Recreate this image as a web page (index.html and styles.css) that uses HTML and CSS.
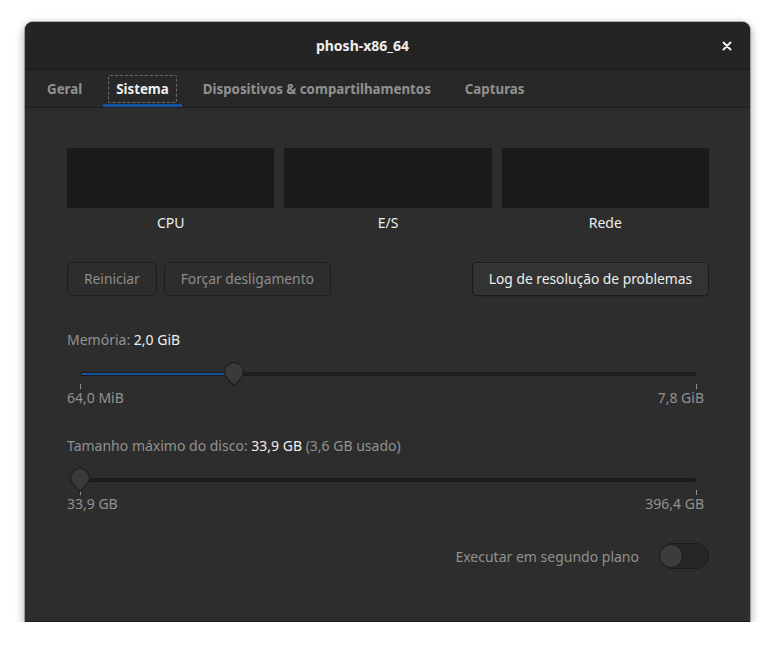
FILE: index.html
```html
<!DOCTYPE html>
<html>
<head>
<meta charset="utf-8">
<link rel="stylesheet" href="styles.css">
</head>
<body>
<div class="window">
  <div class="titlebar">
    <span class="title">phosh-x86_64</span>
    <span class="close">
      <svg width="10" height="10" viewBox="0 0 10 10"><path d="M1.5 1.5 L8.5 8.5 M8.5 1.5 L1.5 8.5" stroke="#eeeeec" stroke-width="2" stroke-linecap="round"/></svg>
    </span>
  </div>
  <div class="tabs">
    <div class="tab">Geral</div>
    <div class="tab active"><span class="focus">Sistema</span></div>
    <div class="tab">Dispositivos &amp; compartilhamentos</div>
    <div class="tab">Capturas</div>
  </div>
  <div class="content">
    <div class="graphs">
      <div class="graph"><div class="gbox"></div><div class="glabel">CPU</div></div>
      <div class="graph"><div class="gbox"></div><div class="glabel">E/S</div></div>
      <div class="graph"><div class="gbox"></div><div class="glabel">Rede</div></div>
    </div>
    <div class="buttons">
      <button class="btn disabled">Reiniciar</button>
      <button class="btn disabled">Forçar desligamento</button>
      <span class="spacer"></span>
      <button class="btn">Log de resolução de problemas</button>
    </div>
    <div class="setting">
      <div class="slabel">Memória: <span class="val">2,0 GiB</span></div>
      <div class="slider">
        <div class="trough"><div class="fill" style="width:25%"></div></div>
        <div class="knob" style="left:25%"></div>
      </div>
      <div class="ticks"><span class="tick"></span><span class="tick"></span></div>
      <div class="range"><span>64,0 MiB</span><span>7,8 GiB</span></div>
    </div>
    <div class="setting disk">
      <div class="slabel">Tamanho máximo do disco: <span class="val">33,9 GB</span> (3,6 GB usado)</div>
      <div class="slider">
        <div class="trough"><div class="fill" style="width:0%"></div></div>
        <div class="knob" style="left:0%"></div>
      </div>
      <div class="ticks"><span class="tick"></span><span class="tick"></span></div>
      <div class="range"><span>33,9 GB</span><span>396,4 GB</span></div>
    </div>
    <div class="switchrow">
      <span class="swlabel">Executar em segundo plano</span>
      <span class="switch"><span class="swknob"></span></span>
    </div>
  </div>
</div>
</body>
</html>
```
FILE: styles.css
```css
html, body {
  margin: 0;
  padding: 0;
  background: #ffffff;
}
body {
  font-family: "Noto Sans", "Open Sans", sans-serif;
  font-size: 14px;
  color: #eeeeec;
}
.window {
  margin: 22px 0 0 25px;
  width: 725px;
  height: 600px;
  display: flex;
  flex-direction: column;
  background: #2d2d2d;
  border-radius: 8px 8px 0 0;
  box-shadow: 0 3px 9px 1px rgba(0,0,0,0.35), 0 0 0 1px rgba(0,0,0,0.25);
  overflow: hidden;
  border-bottom: 1px solid #1c1c1c;
  box-sizing: border-box;
}
.titlebar {
  height: 47px;
  flex: none;
  background: #242424;
  border-bottom: 1px solid #1b1b1b;
  display: flex;
  align-items: center;
}
.title {
  flex: 1;
  text-align: center;
  font-weight: bold;
  font-size: 14px;
  color: #eeeeec;
}
.close {
  width: 50px;
  display: flex;
  justify-content: center;
  padding-left: 3px;
  box-sizing: border-box;
}
.tabs {
  height: 37px;
  flex: none;
  background: #282828;
  border-bottom: 1px solid #1f1f1f;
  display: flex;
  align-items: stretch;
  padding-left: 5px;
}
.tab {
  display: flex;
  align-items: center;
  padding: 0 13px;
  margin: 0 4px;
  font-weight: bold;
  color: #919190;
  font-size: 13.3px;
}
.tab.active {
  color: #eeeeec;
  padding: 0 5px;
  box-shadow: inset 0 -3px 0 #15539e;
}
.focus {
  border: 1px dashed #6b6b6b;
  border-radius: 2px;
  padding: 4px 7px;
}
.content {
  flex: 1;
  padding: 40px 41px 0 42px;
  display: flex;
  flex-direction: column;
}
.graphs {
  display: grid;
  grid-template-columns: 1fr 1fr 1fr;
  gap: 10px;
}
.gbox {
  height: 60px;
  background: #1b1b1b;
}
.glabel {
  text-align: center;
  margin-top: 6px;
  line-height: 18px;
  color: #eeeeec;
}
.buttons {
  display: flex;
  gap: 7px;
  margin-top: 30px;
}
.spacer { flex: 1; }
.btn {
  font-family: inherit;
  font-size: 13.8px;
  height: 34px;
  padding: 0 16px 1px;
  border-radius: 5px;
  border: 1px solid #1b1b1b;
  background: #333333;
  color: #eeeeec;
  box-shadow: inset 0 1px rgba(255,255,255,0.03), 0 1px 1px rgba(0,0,0,0.15);
}
.btn.disabled {
  background: #2d2d2d;
  color: #8d8d8c;
  border-color: #1f1f1f;
  box-shadow: none;
}
.setting {
  margin-top: 35px;
}
.setting.disk {
  margin-top: 30px;
}
.slabel {
  color: #919190;
  line-height: 18px;
}
.val { color: #eeeeec; }
.slider {
  position: relative;
  height: 10px;
  margin: 20px 13px 0 13px;
}
.trough {
  position: absolute;
  left: 0; right: 0; top: 3px;
  height: 4px;
  border-radius: 3px;
  background: #1f1f1f;
  border: 1px solid #1a1a1a;
  box-sizing: border-box;
}
.fill {
  height: 100%;
  background: #15539e;
  border-radius: 3px;
}
.knob {
  position: absolute;
  top: -7px;
  width: 20px;
  height: 20px;
  margin-left: -10px;
  box-sizing: border-box;
  background: #3a3a3a;
  border: 1px solid #1b1b1b;
  border-radius: 50% 50% 0 50%;
  transform: rotate(45deg);
}
.ticks {
  display: flex;
  justify-content: space-between;
  margin: 0 12px 0 13px;
  height: 10px;
  align-items: flex-end;
}
.tick {
  width: 1px;
  height: 5px;
  background: #919190;
}
.range {
  display: flex;
  justify-content: space-between;
  color: #919190;
  line-height: 18px;
  margin-right: 5px;
}
.switchrow {
  display: flex;
  justify-content: flex-end;
  align-items: center;
  gap: 20px;
  margin-top: 30px;
}
.swlabel {
  color: #919190;
}
.switch {
  width: 48px;
  height: 24px;
  border-radius: 13px;
  background: #262626;
  border: 1px solid #1b1b1b;
  display: flex;
  align-items: center;
  box-sizing: content-box;
}
.swknob {
  width: 24px;
  height: 24px;
  border-radius: 50%;
  background: #3c3c3c;
  border: 1px solid #1b1b1b;
  box-sizing: border-box;
  margin-left: -1px;
}
```
